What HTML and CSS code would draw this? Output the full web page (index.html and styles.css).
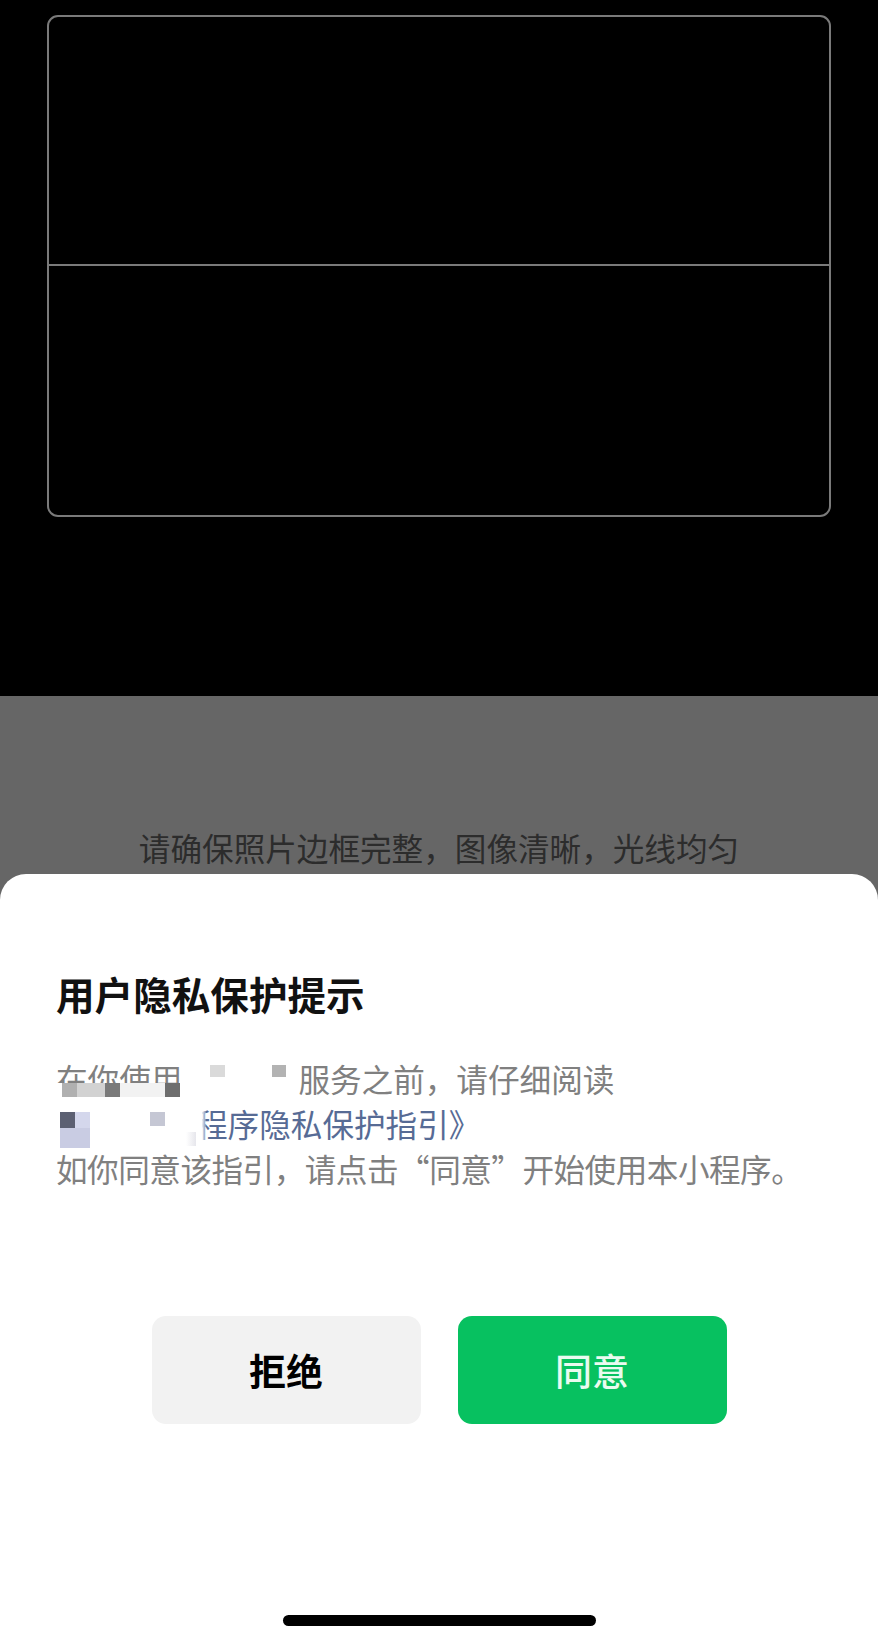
FILE: index.html
```html
<!DOCTYPE html>
<html lang="zh-CN">
<head>
<meta charset="utf-8">
<title>用户隐私保护提示</title>
<link rel="stylesheet" href="styles.css">
</head>
<body>
<div class="page">
  <section class="camera">
    <div class="frame">
      <div class="frame-top"></div>
      <div class="frame-bottom"></div>
    </div>
  </section>
  <section class="lower">
    <p class="hint">请确保照片边框完整，图像清晰，光线均匀</p>
    <div class="sheet">
      <h1 class="title">用户隐私保护提示</h1>
      <div class="para">
        <div class="line">在你使用<span class="gap g1"></span>服务之前，请仔细阅读</div>
        <div class="line"><span class="gap g2"></span><span class="link">程序隐私保护指引》</span></div>
        <div class="line">如你同意该指引，请点击“同意”开始使用本小程序。</div>
        <div class="mosaic">
          <i class="px a1"></i><i class="px a2"></i>
          <i class="band"></i>
          <i class="px b1"></i><i class="px b2"></i><i class="px b3"></i><i class="px b4"></i><i class="px b5"></i>
          <i class="px c1"></i><i class="px c2"></i><i class="px c3"></i><i class="px c4"></i><i class="px c5"></i>
          <i class="px cover"></i>
        </div>
      </div>
      <div class="actions">
        <button class="btn reject">拒绝</button>
        <button class="btn agree">同意</button>
      </div>
      <div class="home-bar"></div>
    </div>
  </section>
</div>
</body>
</html>
```
FILE: styles.css
```css
* { box-sizing: border-box; }
html, body { margin: 0; padding: 0; }
body {
  width: 878px;
  height: 1644px;
  overflow: hidden;
  font-family: "Noto Sans CJK SC", "Noto Sans", sans-serif;
  background: #666666;
}
.page { display: flex; flex-direction: column; height: 1644px; }

.camera {
  background: #000;
  height: 696px;
  padding: 15px 47px 0 47px;
}
.frame {
  height: 502px;
  border: 2px solid #7a7a7a;
  border-radius: 11px;
  display: flex;
  flex-direction: column;
}
.frame-top { height: 249px; border-bottom: 2px solid #7a7a7a; }
.frame-bottom { flex: 1; }

.lower {
  flex: 1;
  background: #666666;
  display: flex;
  flex-direction: column;
}
.hint {
  margin: 0;
  padding-top: 131px;
  height: 178px;
  text-align: center;
  font-size: 31.6px;
  line-height: 40px;
  color: #2c2c2c;
}
.sheet {
  flex: 1;
  background: #fff;
  border-radius: 26px 26px 0 0;
  padding: 92px 0 0 56px;
  display: flex;
  flex-direction: column;
}
.title {
  margin: 0;
  font-size: 38.6px;
  line-height: 54px;
  font-weight: 700;
  color: #111;
}
.para {
  position: relative;
  margin-top: 36px;
  font-size: 31.6px;
  line-height: 45px;
  color: #808080;
}
.line { white-space: nowrap; }
.gap { display: inline-block; height: 10px; }
.g1 { width: 116px; }
.g2 { width: 140px; }
.link { color: #576b95; }
.line:nth-child(3) { letter-spacing: -0.5px; }

.mosaic { position: absolute; left: 0; top: 0; width: 0; height: 0; }
.px, .band { position: absolute; display: block; }
.band { left: 0; top: 27px; width: 126px; height: 15px; background: #fff; }
.a1 { left: 154px; top: 9px; width: 15px; height: 12px; background: #dadada; }
.a2 { left: 216px; top: 9px; width: 14px; height: 12px; background: #b3b3b3; }
.b1 { left: 6px; top: 27px; width: 15px; height: 14px; background: #b0b0b0; }
.b2 { left: 21px; top: 27px; width: 28px; height: 14px; background: #d2d2d2; }
.b3 { left: 49px; top: 27px; width: 15px; height: 14px; background: #7a7a7a; }
.b4 { left: 64px; top: 27px; width: 45px; height: 14px; background: #f2f2f2; }
.b5 { left: 109px; top: 27px; width: 15px; height: 14px; background: #6e6e6e; }
.c1 { left: 4px; top: 56px; width: 15px; height: 16px; background: #5c6072; }
.c2 { left: 19px; top: 56px; width: 15px; height: 16px; background: #d4d7ec; }
.c3 { left: 4px; top: 72px; width: 30px; height: 20px; background: #c9cce3; }
.c4 { left: 94px; top: 56px; width: 15px; height: 14px; background: #c5c7d4; }
.c5 { left: 130px; top: 76px; width: 14px; height: 14px; background: linear-gradient(90deg, rgba(228,228,234,0), #dcdce4); }
.cover { left: 140px; top: 52px; width: 10px; height: 40px; background: linear-gradient(90deg, #fff 55%, rgba(255,255,255,0.2)); }

.actions {
  display: flex;
  justify-content: center;
  gap: 37px;
  margin-top: 125px;
  margin-left: -56px;
}
.btn {
  width: 269px;
  height: 108px;
  border: 0;
  border-radius: 14px;
  font-family: "Noto Sans CJK SC", "Noto Sans", sans-serif;
  font-size: 37px;
  padding: 0;
}
.reject { background: #f2f2f2; color: #000; font-weight: 700; }
.agree { background: #07c160; color: #eafbf0; font-weight: 500; }

.home-bar {
  align-self: center;
  margin-left: -56px;
  margin-top: 191px;
  width: 313px;
  height: 11px;
  border-radius: 6px;
  background: #000;
}
```
